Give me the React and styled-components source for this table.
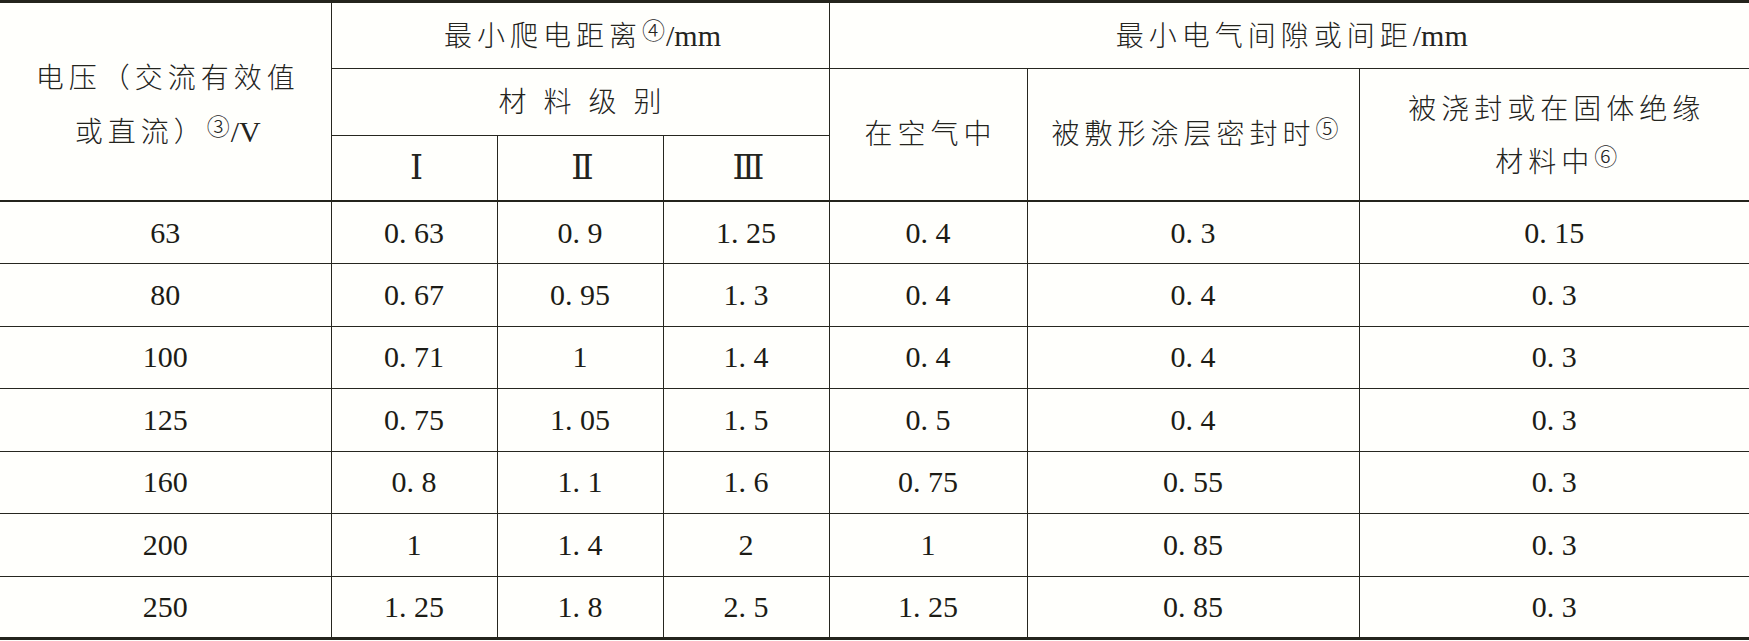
import React from 'react';
import styled, { createGlobalStyle } from 'styled-components';

const Global = createGlobalStyle`
  html, body { margin: 0; padding: 0; background: #fffffc; }
  body { font-family: "Liberation Serif", "Noto Sans CJK SC", serif; color: #1c1c16; }
`;

const LINE = '#26261f';

const Table = styled.table`
  width: 1749px;
  table-layout: fixed;
  border-collapse: collapse;
  border-top: 3px solid #24241c;
  border-bottom: 3px solid #24241c;
  border-left: hidden;
  border-right: hidden;
`;

const Col = styled.col`
  width: ${p => p.$w}px;
`;

const Head = styled.thead`
  border-bottom: 2px solid #24241c;
`;

const Row = styled.tr`
  height: ${p => p.$h}px;
`;

const HeadCell = styled.th`
  padding: ${p => (p.$top ? `${p.$top}px 0 0 5px` : '0 0 0 5px')};
  font-weight: 300;
  font-family: "Liberation Serif", "Noto Sans CJK SC", serif;
  font-size: 28px;
  letter-spacing: ${p => p.$ls ?? 5}px;
  line-height: 53px;
  text-align: center;
  vertical-align: middle;
  border: 1px solid ${LINE};
  color: #24241e;
`;

const Unit = styled.span`
  font-size: 30px;
  font-weight: normal;
  letter-spacing: 0;
`;

const Note = styled.sup`
  font-family: "Noto Sans CJK SC", "DejaVu Sans", sans-serif;
  font-size: 23px;
  font-weight: 300;
  letter-spacing: 0;
  vertical-align: 7px;
  line-height: 0;
  margin: 0 1px 0 0;
`;

const Roman = styled.span`
  font-family: "DejaVu Serif", "Liberation Serif", "Noto Sans CJK SC", serif;
  font-size: 33px;
  font-weight: normal;
  letter-spacing: 0;
`;

const Cell = styled.td`
  padding: 0;
  font-size: 30px;
  line-height: 1;
  text-align: center;
  vertical-align: middle;
  border: 1px solid ${LINE};
  color: #1c1c16;
`;

const widths = [331, 166, 166, 166, 198, 332, 390];

const data = [
  ['63', '0. 63', '0. 9', '1. 25', '0. 4', '0. 3', '0. 15'],
  ['80', '0. 67', '0. 95', '1. 3', '0. 4', '0. 4', '0. 3'],
  ['100', '0. 71', '1', '1. 4', '0. 4', '0. 4', '0. 3'],
  ['125', '0. 75', '1. 05', '1. 5', '0. 5', '0. 4', '0. 3'],
  ['160', '0. 8', '1. 1', '1. 6', '0. 75', '0. 55', '0. 3'],
  ['200', '1', '1. 4', '2', '1', '0. 85', '0. 3'],
  ['250', '1. 25', '1. 8', '2. 5', '1. 25', '0. 85', '0. 3'],
];

export default function App() {
  return (
    <>
      <Global />
      <Table>
        <colgroup>
          {widths.map((w, i) => (
            <Col key={i} $w={w} />
          ))}
        </colgroup>
        <Head>
          <Row $h={67}>
            <HeadCell rowSpan={3} $top={8}>
              电压（交流有效值
              <br />
              或直流）<Note>③</Note>
              <Unit>/V</Unit>
            </HeadCell>
            <HeadCell colSpan={3}>
              最小爬电距离<Note>④</Note>
              <Unit>/mm</Unit>
            </HeadCell>
            <HeadCell colSpan={3}>
              最小电气间隙或间距<Unit>/mm</Unit>
            </HeadCell>
          </Row>
          <Row $h={67}>
            <HeadCell colSpan={3}>材 料 级 别</HeadCell>
            <HeadCell rowSpan={2}>在空气中</HeadCell>
            <HeadCell rowSpan={2}>
              被敷形涂层密封时<Note>⑤</Note>
            </HeadCell>
            <HeadCell rowSpan={2} $top={2}>
              被浇封或在固体绝缘
              <br />
              材料中<Note>⑥</Note>
            </HeadCell>
          </Row>
          <Row $h={65.5}>
            <HeadCell $ls={0}>
              <Roman>Ⅰ</Roman>
            </HeadCell>
            <HeadCell $ls={0}>
              <Roman>Ⅱ</Roman>
            </HeadCell>
            <HeadCell $ls={0}>
              <Roman>Ⅲ</Roman>
            </HeadCell>
          </Row>
        </Head>
        <tbody>
          {data.map((r, i) => (
            <Row key={i} $h={62.5}>
              {r.map((v, j) => (
                <Cell key={j}>{v}</Cell>
              ))}
            </Row>
          ))}
        </tbody>
      </Table>
    </>
  );
}
